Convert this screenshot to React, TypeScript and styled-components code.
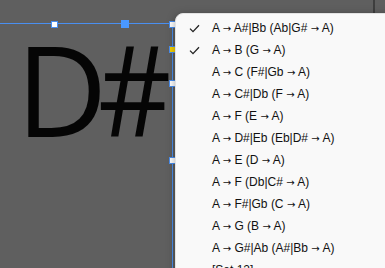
import React from 'react';
import styled, { createGlobalStyle } from 'styled-components';

const GlobalStyle = createGlobalStyle`
  html, body {
    margin: 0;
    padding: 0;
    background: #5f5f5f;
  }
`;

const Stage = styled.div`
  position: relative;
  width: 385px;
  height: 268px;
  overflow: hidden;
  background: #5f5f5f;
  font-family: "Open Sans", "Noto Sans", sans-serif;
`;

const EdgeStrip = styled.div`
  position: absolute;
  top: 0;
  left: 373px;
  width: 2px;
  height: 14px;
  background: #3e3e3e;
`;

// selected text box on the canvas
const TextFrame = styled.div`
  position: absolute;
  left: -20px;
  top: 23px;
  width: 192px;
  height: 300px;
  border-top: 1px solid #4a8ff0;
  border-right: 1px solid #4a8ff0;
`;

const BigText = styled.div`
  display: flex;
  padding-left: 36px;
  margin-top: 1px;
  font-family: "Open Sans", "Noto Sans", sans-serif;
  font-size: 126px;
  line-height: 1;
  color: #050505;
  white-space: nowrap;
`;

const Letter = styled.span`
  letter-spacing: -9px;
`;

const Sharp = styled.span`
  display: inline-block;
  transform: scaleX(0.9);
  transform-origin: left center;
`;

const Handle = styled.div<{ $x: number; $y: number; $kind?: 'white' | 'yellow' }>`
  position: absolute;
  left: ${p => p.$x - 3}px;
  top: ${p => p.$y - 3}px;
  width: 5px;
  height: 5px;
  border: 1px solid #4a8ff0;
  background: ${p => (p.$kind === 'yellow' ? '#f5d000' : '#ffffff')};
`;

const BlueHandle = styled.div<{ $x: number; $y: number }>`
  position: absolute;
  left: ${p => p.$x - 4}px;
  top: ${p => p.$y - 4}px;
  width: 8px;
  height: 8px;
  background: #4a98ff;
`;

const Menu = styled.div`
  position: absolute;
  left: 175px;
  top: 13px;
  width: 230px;
  height: 280px;
  background: #f9f9f9;
  border-radius: 8px 0 0 0;
  border: 1px solid #e3e3e3;
  box-shadow: 0 2px 8px rgba(0, 0, 0, 0.35);
  padding-top: 3px;
  box-sizing: border-box;
  display: flex;
  flex-direction: column;
`;

const Item = styled.div`
  display: flex;
  align-items: center;
  height: 22px;
  font-family: "Liberation Sans", Arial, sans-serif;
  font-size: 12px;
  color: #111;
  white-space: pre;
`;

const Arrow = styled.span`
  font-family: "DejaVu Sans", sans-serif;
  font-size: 10px;
`;

const CheckSlot = styled.div`
  width: 36px;
  display: flex;
  justify-content: center;
  align-items: center;
`;

const Check = () => (
  <svg width="11" height="9" viewBox="0 0 11 9">
    <path d="M1 4.6 L4 7.6 L10 1.2" fill="none" stroke="#222" strokeWidth="1.3" />
  </svg>
);

const items: { label: string; checked?: boolean }[] = [
  { label: 'A → A#|Bb (Ab|G# → A)', checked: true },
  { label: 'A → B (G → A)', checked: true },
  { label: 'A → C (F#|Gb → A)' },
  { label: 'A → C#|Db (F → A)' },
  { label: 'A → F (E → A)' },
  { label: 'A → D#|Eb (Eb|D# → A)' },
  { label: 'A → E (D → A)' },
  { label: 'A → F (Db|C# → A)' },
  { label: 'A → F#|Gb (C → A)' },
  { label: 'A → G (B → A)' },
  { label: 'A → G#|Ab (A#|Bb → A)' },
  { label: '[Set 12]' },
];

const renderLabel = (label: string) =>
  label.split('→').map((part, i) => (
    <React.Fragment key={i}>
      {i > 0 && <Arrow>→</Arrow>}
      {part}
    </React.Fragment>
  ));

export default function App() {
  return (
    <Stage>
      <GlobalStyle />
      <EdgeStrip />
      <TextFrame>
        <BigText>
          <Letter>D</Letter>
          <Sharp>#</Sharp>
        </BigText>
      </TextFrame>
      <Handle $x={54} $y={24} />
      <BlueHandle $x={125} $y={24} />
      <Handle $x={172} $y={24} />
      <Handle $x={172} $y={49} $kind="yellow" />
      <Handle $x={172} $y={83} />
      <Handle $x={172} $y={160} />
      <Menu>
        {items.map(it => (
          <Item key={it.label}>
            <CheckSlot>{it.checked && <Check />}</CheckSlot>
            <span>{renderLabel(it.label)}</span>
          </Item>
        ))}
      </Menu>
    </Stage>
  );
}
